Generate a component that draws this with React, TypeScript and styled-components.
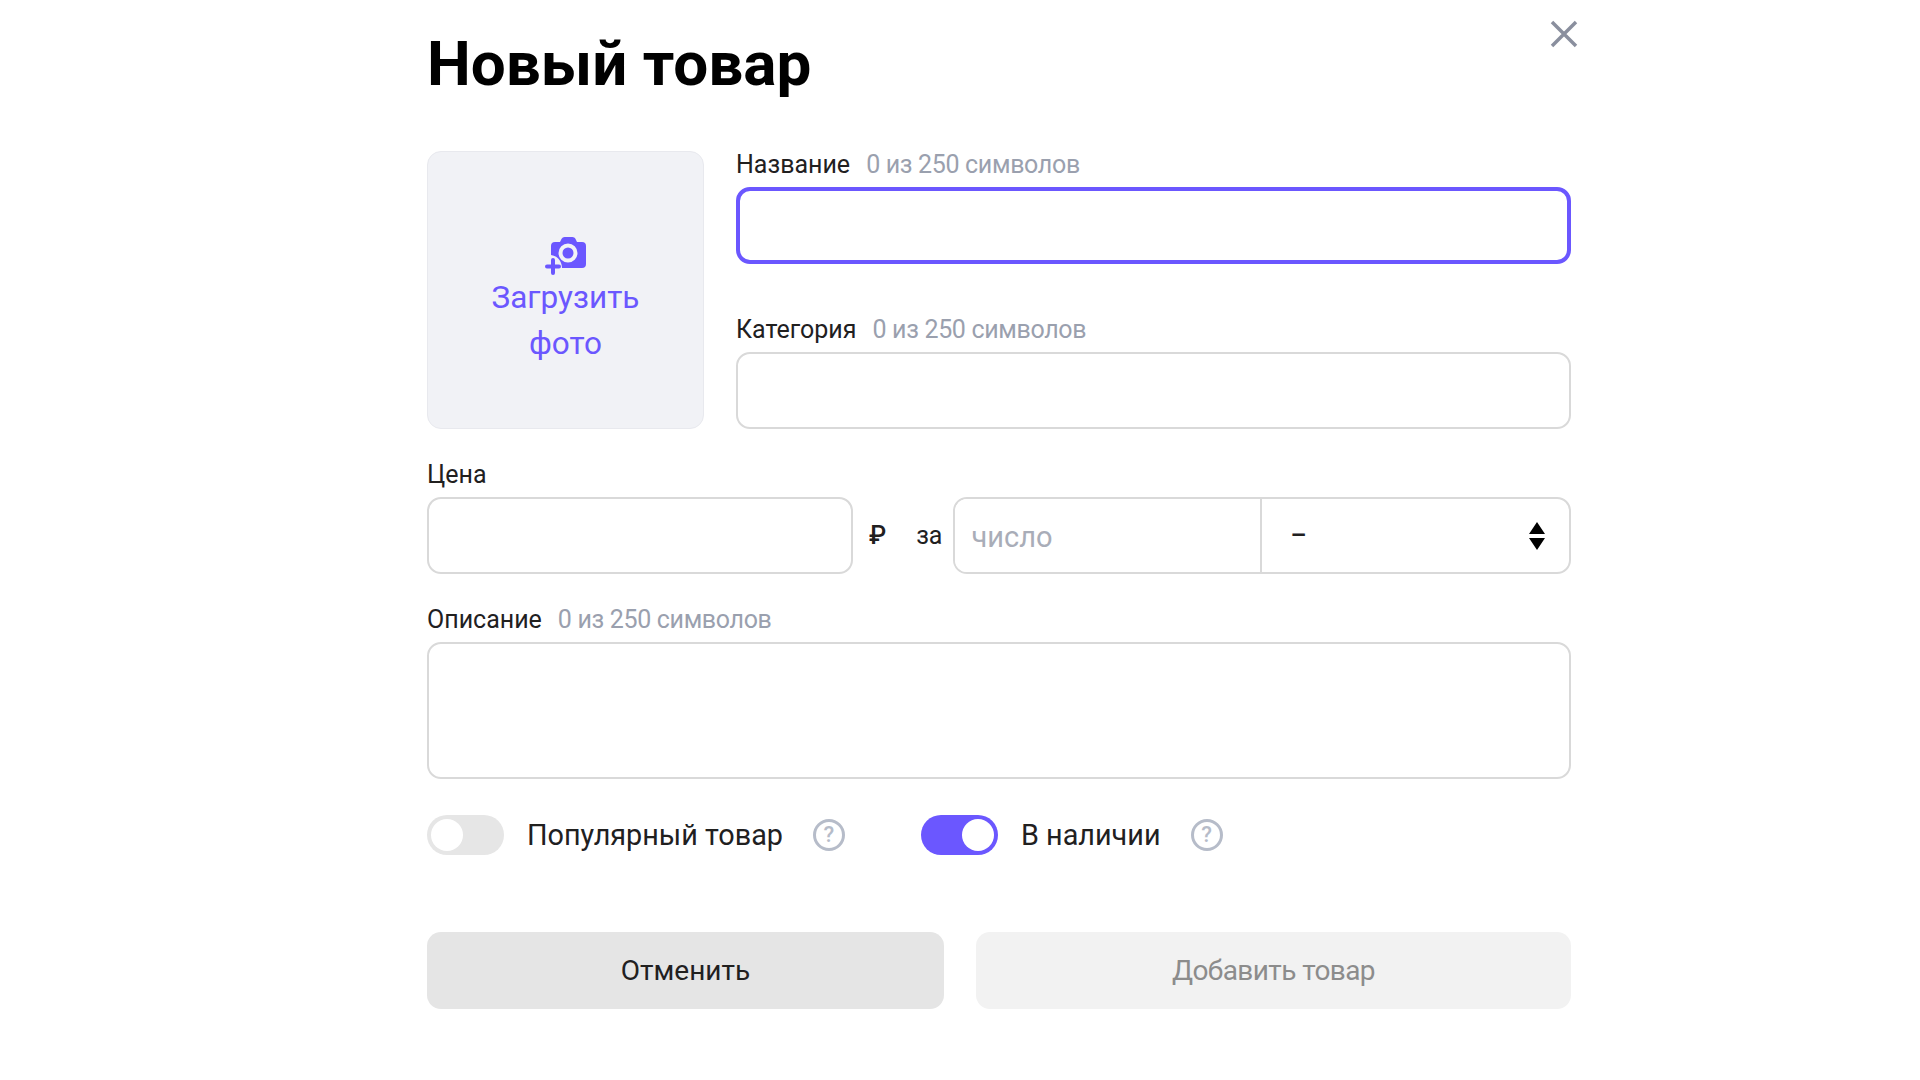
import React from "react";
import styled, { createGlobalStyle } from "styled-components";

const Global = createGlobalStyle`
  html, body { margin: 0; padding: 0; background: #fff; }
  * { box-sizing: border-box; }
  body { font-family: Roboto, "Noto Sans", sans-serif; color: #21201f; }
`;

const Page = styled.div`
  width: 1920px;
  height: 1080px;
  overflow: hidden;
  padding-left: 427px;
`;

const Form = styled.form`
  position: relative;
  width: 1144px;
  display: flex;
  flex-direction: column;
`;

const Title = styled.h1`
  margin: 0;
  padding-top: 28px;
  height: 151px;
  font-size: 62px;
  line-height: 72px;
  font-weight: 700;
  color: #000;
`;

const Close = styled.button`
  position: absolute;
  top: 19px;
  right: -8px;
  width: 30px;
  height: 30px;
  padding: 0;
  border: 0;
  background: none;
  color: #8a8f9e;
`;

const TopRow = styled.div`
  display: flex;
  gap: 32px;
`;

const Upload = styled.button`
  flex: none;
  width: 277px;
  height: 278px;
  border: 1px solid #e8e9ee;
  border-radius: 14px;
  background: #f1f2f6;
  color: #6b57ff;
  font: 400 31.5px/46px Roboto, sans-serif;
  padding: 20px 0 0;
  display: flex;
  flex-direction: column;
  align-items: center;
  justify-content: center;
`;

const Fields = styled.div`
  flex: 1;
  display: flex;
  flex-direction: column;
  gap: 12px;
`;

const Field = styled.div`
  display: flex;
  flex-direction: column;
`;

const Label = styled.div<{ $top?: number }>`
  height: 36px;
  margin-top: ${(p) => p.$top ?? 0}px;
  display: flex;
  gap: 16px;
  font-size: 25px;
  line-height: 28px;
  color: #21201f;
`;

const Hint = styled.span`
  color: #9aa0ae;
  letter-spacing: -0.33px;
`;

const Input = styled.input<{ $width?: number; $active?: boolean }>`
  width: ${(p) => (p.$width ? `${p.$width}px` : "100%")};
  height: 77px;
  border: ${(p) => (p.$active ? "4px solid #6b57ff" : "2px solid #d9d9d9")};
  border-radius: 14px;
  background: #fff;
  outline: none;
  padding: 0 16px;
`;

const PriceRow = styled.div`
  display: flex;
  align-items: center;
`;

const Unit = styled.span<{ $left: number; $bold?: boolean }>`
  font-size: 25px;
  line-height: 28px;
  font-weight: ${(p) => (p.$bold ? 500 : 400)};
  margin-left: ${(p) => p.$left}px;
`;

const Group = styled.div`
  margin-left: 11px;
  flex: 1;
  height: 77px;
  border: 2px solid #d9d9d9;
  border-radius: 14px;
  display: flex;
  overflow: hidden;
`;

const NumberInput = styled.input`
  width: 307px;
  border: 0;
  outline: none;
  border-right: 2px solid #d9d9d9;
  padding: 2px 16px 0;
  font: 400 29px Roboto, sans-serif;
  &::placeholder { color: #a9adb8; opacity: 1; }
`;

const Select = styled.div`
  flex: 1;
  display: flex;
  align-items: center;
  justify-content: space-between;
  padding: 0 24px 0 28px;
  font-size: 25px;
  font-weight: 500;
`;

const Textarea = styled.textarea`
  display: block;
  width: 100%;
  height: 137px;
  border: 2px solid #d9d9d9;
  border-radius: 14px;
  outline: none;
  resize: none;
`;

const Switches = styled.div`
  display: flex;
  align-items: center;
  margin-top: 36px;
  height: 40px;
`;

const Toggle = styled.span<{ $on?: boolean }>`
  flex: none;
  width: 77px;
  height: 40px;
  border-radius: 20px;
  padding: 4px;
  display: flex;
  justify-content: ${(p) => (p.$on ? "flex-end" : "flex-start")};
  background: ${(p) => (p.$on ? "#6b57ff" : "#e6e6e6")};
  &::after {
    content: "";
    width: 32px;
    height: 32px;
    border-radius: 50%;
    background: #fff;
  }
`;

const SwitchText = styled.span`
  margin-left: 23px;
  font-size: 28.8px;
  line-height: 40px;
`;

const Help = styled.span<{ $end?: boolean }>`
  margin-left: 30px;
  margin-right: ${(p) => (p.$end ? 0 : 76)}px;
  width: 32px;
  height: 32px;
  border: 3px solid #b6bcc9;
  border-radius: 50%;
  color: #b6bcc9;
  font-size: 22px;
  font-weight: 500;
  line-height: 26px;
  text-align: center;
`;

const Buttons = styled.div`
  display: flex;
  gap: 32px;
  margin-top: 77px;
`;

const Button = styled.button<{ $primary?: boolean }>`
  height: 77px;
  flex: ${(p) => (p.$primary ? "0 0 595px" : "0 0 517px")};
  border: 0;
  border-radius: 14px;
  background: ${(p) => (p.$primary ? "#f2f2f2" : "#e5e5e5")};
  color: ${(p) => (p.$primary ? "#8c8c8c" : "#21201f")};
  font: 400 28px Roboto, sans-serif;
  letter-spacing: ${(p) => (p.$primary ? "-0.6px" : "0")};
`;

const CameraIcon = () => (
  <svg width="44" height="42" viewBox="0 0 44 42" fill="none">
    <path
      fill="#6b57ff"
      d="M7 13a4 4 0 0 1 4-4h5l1.6-3.2A3.4 3.4 0 0 1 20.6 4h7.8c1.3 0 2.4.7 3 1.8L33 9h5a4 4 0 0 1 4 4v18a4 4 0 0 1-4 4H18c0-5-3-12-11-13z"
    />
    <circle cx="24" cy="20" r="7.5" fill="none" stroke="#f1f2f6" strokeWidth="4" />
    <path stroke="#6b57ff" strokeWidth="4" strokeLinecap="round" d="M9 27v13M3 33.5h12" />
  </svg>
);

const CloseIcon = () => (
  <svg width="30" height="30" viewBox="0 0 30 30" fill="none">
    <path stroke="currentColor" strokeWidth="3.5" d="M3 3l24 24M27 3L3 27" />
  </svg>
);

const SortIcon = () => (
  <svg width="16" height="28" viewBox="0 0 16 28">
    <path fill="#000" d="M8 0l8 12H0zM8 28L0 16h16z" />
  </svg>
);

export default function App() {
  return (
    <Page>
      <Global />
      <Form>
        <Title>Новый товар</Title>
        <Close type="button">
          <CloseIcon />
        </Close>
        <TopRow>
          <Upload type="button">
            <CameraIcon />
            <span>Загрузить</span>
            <span>фото</span>
          </Upload>
          <Fields>
            <Field>
              <Label>
                Название <Hint>0 из 250 символов</Hint>
              </Label>
              <Input $active />
            </Field>
            <Field>
              <Label $top={40}>
                Категория <Hint>0 из 250 символов</Hint>
              </Label>
              <Input />
            </Field>
          </Fields>
        </TopRow>
        <Field>
          <Label $top={32}>Цена</Label>
          <PriceRow>
            <Input $width={426} />
            <Unit $left={16} $bold>₽</Unit>
            <Unit $left={30}>за</Unit>
            <Group>
              <NumberInput placeholder="число" />
              <Select>
                <span>–</span>
                <SortIcon />
              </Select>
            </Group>
          </PriceRow>
        </Field>
        <Field>
          <Label $top={32}>
            Описание <Hint>0 из 250 символов</Hint>
          </Label>
          <Textarea />
        </Field>
        <Switches>
          <Toggle />
          <SwitchText>Популярный товар</SwitchText>
          <Help>?</Help>
          <Toggle $on />
          <SwitchText>В наличии</SwitchText>
          <Help $end>?</Help>
        </Switches>
        <Buttons>
          <Button type="button">Отменить</Button>
          <Button type="button" $primary>
            Добавить товар
          </Button>
        </Buttons>
      </Form>
    </Page>
  );
}
